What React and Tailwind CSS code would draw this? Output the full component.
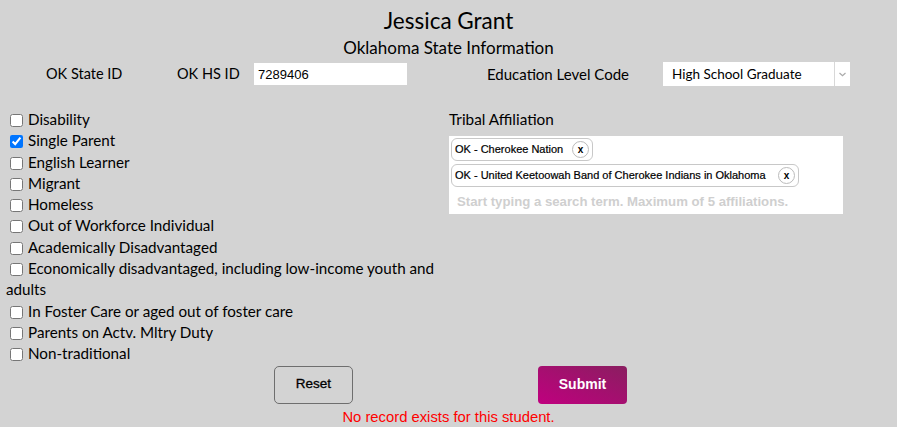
import React from "react";

const items = [
  ["Disability", false],
  ["Single Parent", true],
  ["English Learner", false],
  ["Migrant", false],
  ["Homeless", false],
  ["Out of Workforce Individual", false],
  ["Academically Disadvantaged", false],
  ["Economically disadvantaged, including low-income youth and adults", false],
  ["In Foster Care or aged out of foster care", false],
  ["Parents on Actv. Mltry Duty", false],
  ["Non-traditional", false],
];

function Tag({ label, width }) {
  return (
    <div
      className="flex h-[24px] items-center justify-between rounded-[6px] border border-[#c8c8c8] bg-white pl-[3px] pr-[3px]"
      style={{ width }}
    >
      <span className="font-['Liberation_Sans',sans-serif] text-[11px] text-black [-webkit-text-stroke:0.2px_black]">{label}</span>
      <span className="flex h-[17px] w-[17px] items-center justify-center rounded-full border border-[#bbb] font-['Liberation_Sans',sans-serif] text-[10px] font-bold leading-none text-black">
        x
      </span>
    </div>
  );
}

export default function App() {
  return (
    <div className="min-h-[427px] w-full bg-[#d3d3d3] font-['Lato',sans-serif] text-black">
      <h1 className="pt-[8px] text-center text-[22.5px] leading-[26px]">Jessica Grant</h1>
      <h2 className="mt-[4px] text-center text-[17px] leading-[20px]">Oklahoma State Information</h2>
      <div className="mt-[4px] flex h-[24px] items-center pl-[46px] text-[14.5px]">
        <span className="w-[131px]">OK State ID</span>
        <span className="w-[77px]">OK HS ID</span>
        <input
          readOnly
          value="7289406"
          className="h-[22px] w-[153px] bg-white px-[4px] font-['Liberation_Sans',sans-serif] text-[13px] text-black outline-none"
        />
        <span className="ml-[80px] w-[176px] text-[15px]">Education Level Code</span>
        <div className="flex h-[24px] w-[187px] items-center bg-white">
          <span className="flex-1 pl-[9px] text-[13.5px]">High School Graduate</span>
          <span className="flex h-full w-[16px] items-center justify-center border-l border-[#d8d8d8]">
            <svg width="7" height="5" viewBox="0 0 7 5">
              <path d="M0.5 1 L3.5 3.8 L6.5 1" fill="none" stroke="#aaa" strokeWidth="1.2" />
            </svg>
          </span>
        </div>
      </div>
      <div className="mt-[23px] flex">
        <div className="w-[449px] pl-[6px] text-[15.2px] leading-[21.3px]">
          {items.map(([label, checked]) => (
            <div key={label}>
              <input
                type="checkbox"
                defaultChecked={checked}
                className="ml-[4px] mr-[5px] h-[13px] w-[13px] translate-y-[2px] align-baseline"
              />
              {label}
            </div>
          ))}
        </div>
        <div className="flex-1">
          <div className="text-[15.3px] leading-[21px]">Tribal Affiliation</div>
          <div className="mt-[6px] flex h-[78px] w-[394px] flex-col gap-[3px] bg-white p-[2px]">
            <Tag label="OK - Cherokee Nation" width={142} />
            <Tag label="OK - United Keetoowah Band of Cherokee Indians in Oklahoma" width={348} />
            <div className="pl-[6px] pt-[2px] font-['Liberation_Sans',sans-serif] text-[13.2px] font-bold text-[#cfcfcf]">
              Start typing a search term. Maximum of 5 affiliations.
            </div>
          </div>
        </div>
      </div>
      <div className="mt-[1px] flex pl-[274px]">
        <button className="h-[38px] w-[79px] rounded-[5px] border border-[#6e6e6e] font-['Liberation_Sans',sans-serif] text-[13.5px] font-medium text-black [-webkit-text-stroke:0.3px_black]">
          Reset
        </button>
        <button className="ml-[185px] h-[38px] w-[89px] rounded-[4px] bg-[linear-gradient(to_bottom_left,#8a1e60,#c0007f)] font-['Liberation_Sans',sans-serif] text-[14px] font-bold text-white">
          Submit
        </button>
      </div>
      <div className="mt-[4px] text-center font-['Liberation_Sans',sans-serif] text-[14.8px] leading-[18px] text-[#ff0000]">
        No record exists for this student.
      </div>
    </div>
  );
}
